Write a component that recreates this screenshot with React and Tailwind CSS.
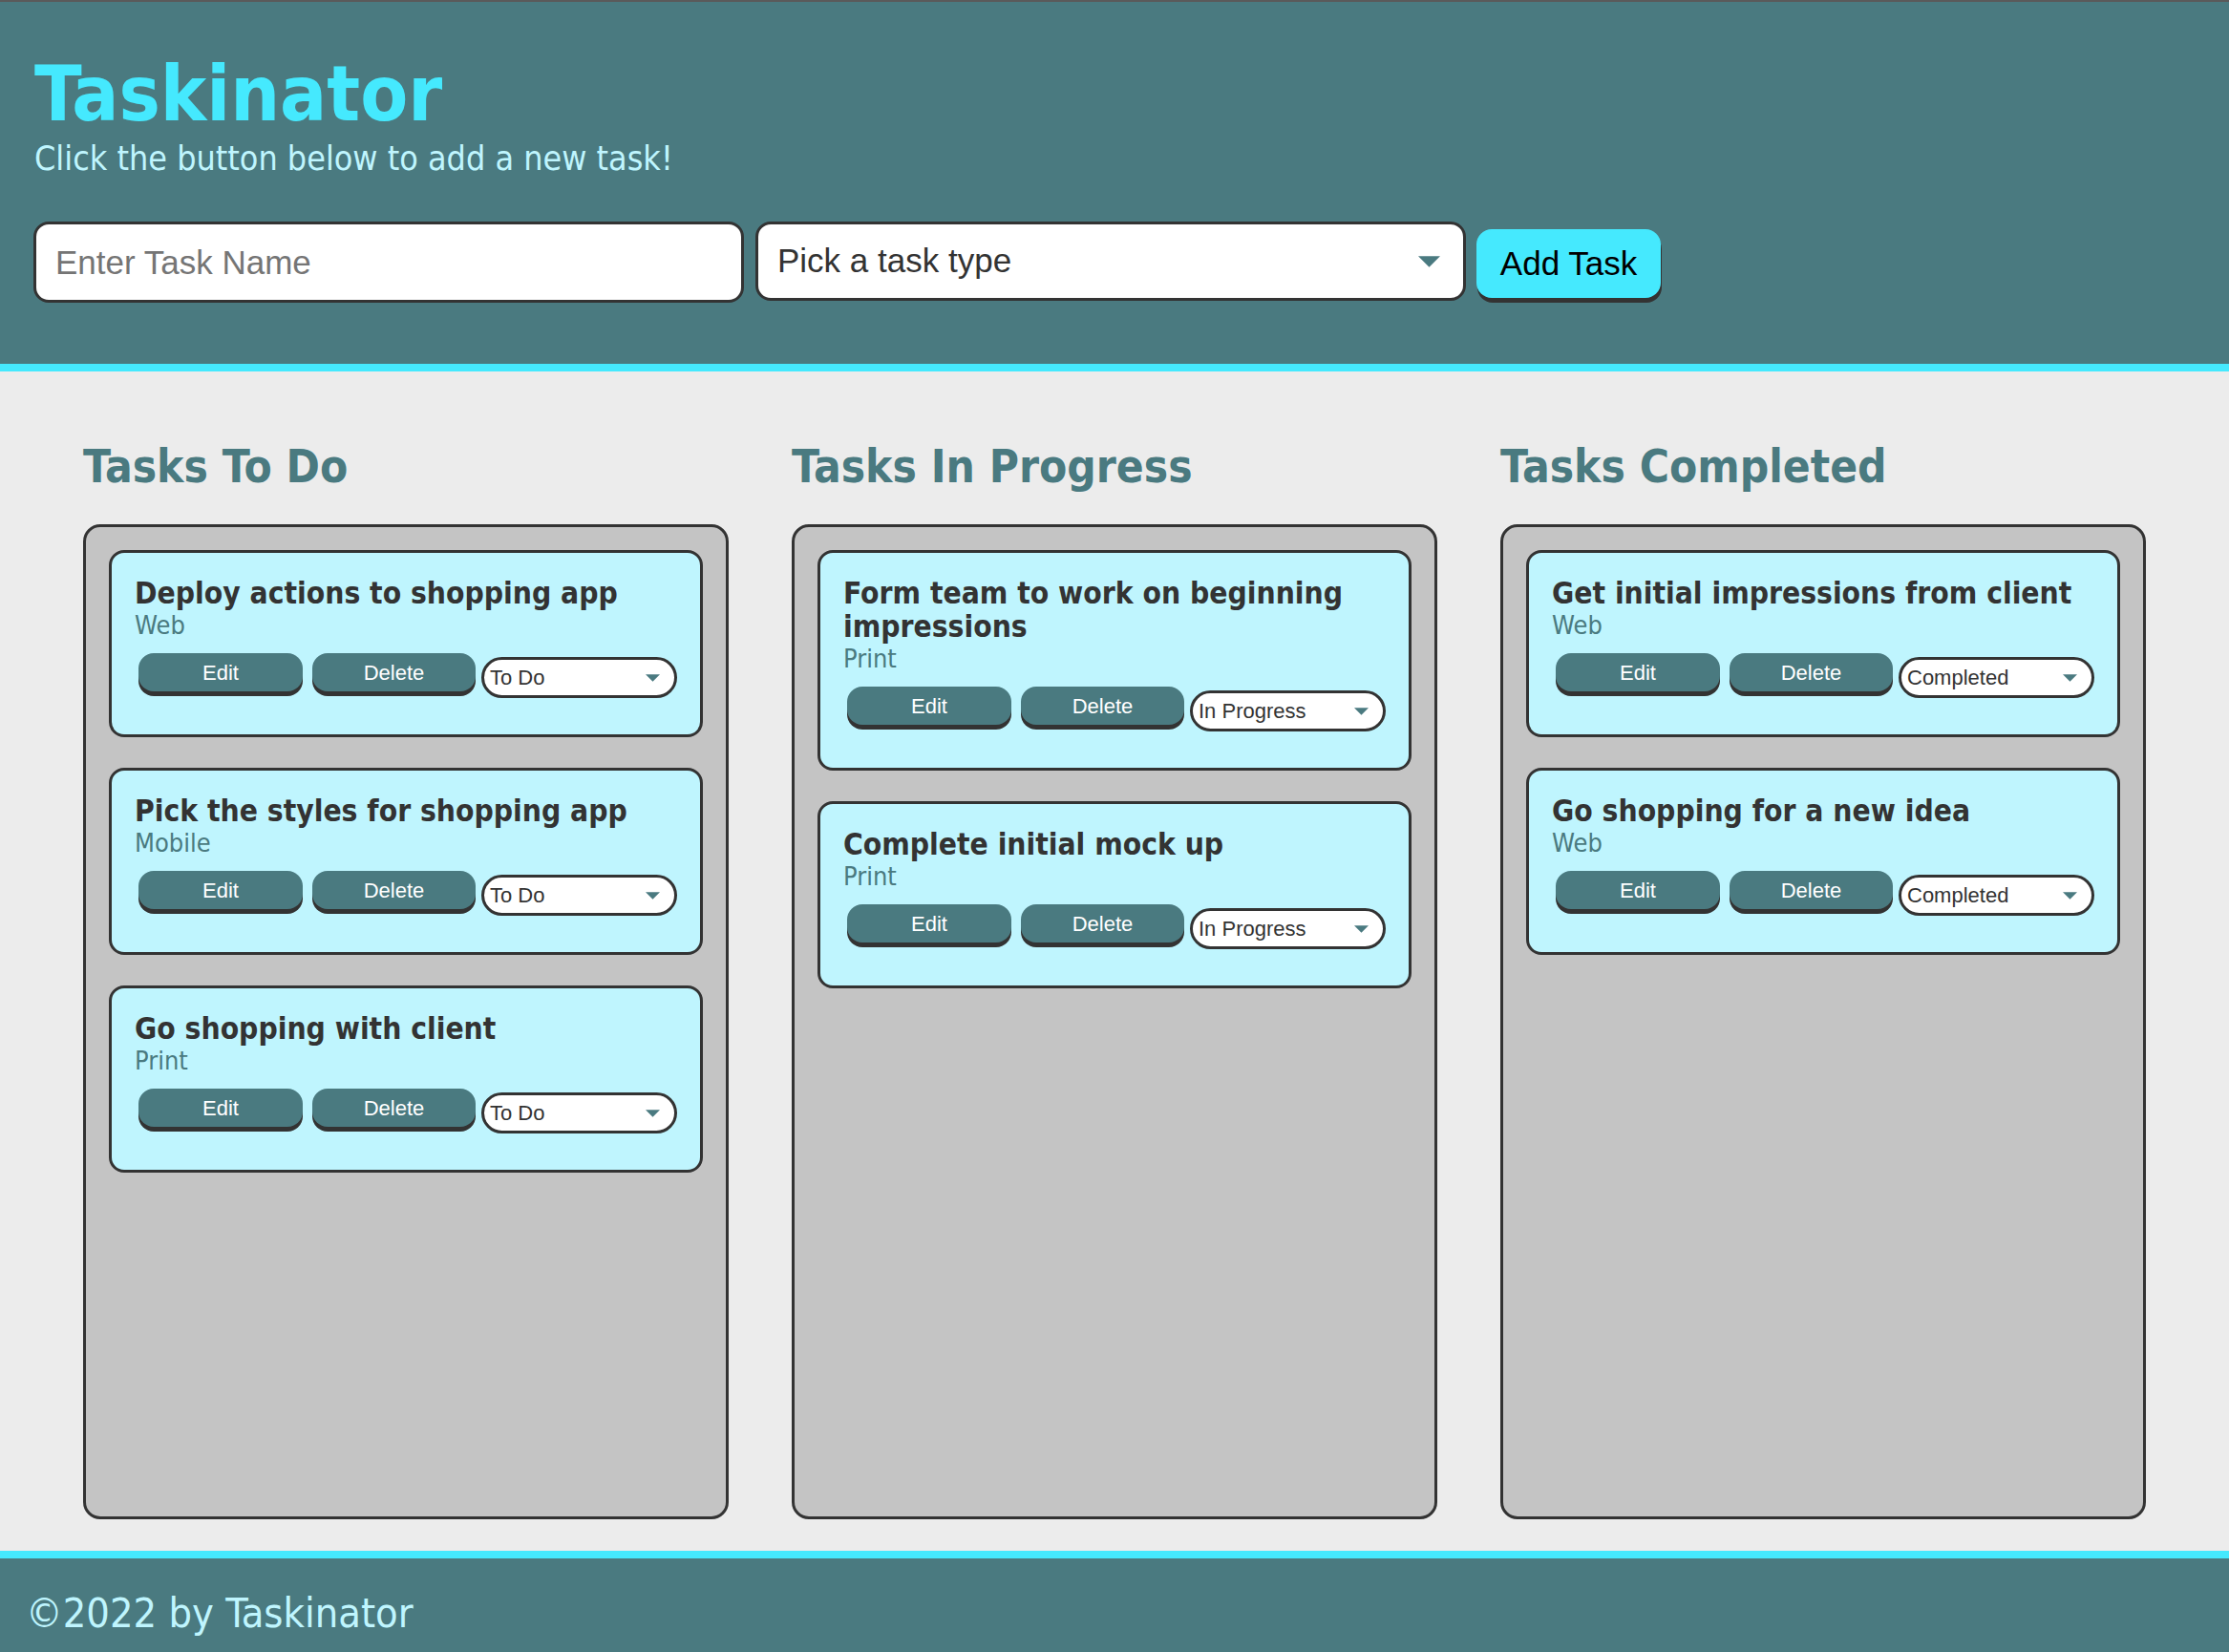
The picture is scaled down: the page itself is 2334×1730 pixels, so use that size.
import React from "react";

const cond = "font-['DejaVu_Sans_Condensed','DejaVu_Sans',sans-serif]";
const arial = "font-['Liberation_Sans',Arial,sans-serif]";

function Arrow({ className }) {
  return (
    <svg className={className} viewBox="0 0 20 10" fill="#4a7a80">
      <path d="M0 0 L20 0 L10 10 Z" />
    </svg>
  );
}

function Card({ name, type, status }) {
  return (
    <div className="rounded-[16px] border-[3px] border-[#333] bg-[#bff5fe] px-[24px] pt-[25px] pb-[38px]">
      <h3 className={`${cond} text-[31.5px] leading-[35px] font-bold text-[#333]`}>{name}</h3>
      <p className={`${cond} text-[27px] leading-[31px] text-[#4a7a80]`}>{type}</p>
      <div className="mt-[14px] flex items-start">
        <button className={`${arial} ml-[4px] h-[40px] w-[172px] rounded-[16px] bg-[#4a7a80] text-[22px] text-white shadow-[0_5px_0_#333]`}>
          Edit
        </button>
        <button className={`${arial} ml-[10px] h-[40px] w-[171px] rounded-[16px] bg-[#4a7a80] text-[22px] text-white shadow-[0_5px_0_#333]`}>
          Delete
        </button>
        <div className={`${arial} ml-[6px] mt-[4px] flex h-[43px] flex-1 items-center justify-between rounded-[22px] border-[3px] border-[#333] bg-white pl-[6px] pr-[15px] text-[22px] text-[#333]`}>
          <span>{status}</span>
          <Arrow className="h-[8px] w-[15px]" />
        </div>
      </div>
    </div>
  );
}

function Column({ title, tasks }) {
  return (
    <section className="flex flex-col">
      <h2 className={`${cond} text-[47.4px] leading-[53px] font-bold text-[#4a7a80]`}>{title}</h2>
      <div className="mt-[34px] flex h-[1042px] flex-col gap-[32px] rounded-[18px] border-[3px] border-[#333] bg-[#c4c4c4] p-[24px]">
        {tasks.map((t) => (
          <Card key={t.name} {...t} />
        ))}
      </div>
    </section>
  );
}

export default function App() {
  const todo = [
    { name: "Deploy actions to shopping app", type: "Web", status: "To Do" },
    { name: "Pick the styles for shopping app", type: "Mobile", status: "To Do" },
    { name: "Go shopping with client", type: "Print", status: "To Do" },
  ];
  const progress = [
    { name: "Form team to work on beginning impressions", type: "Print", status: "In Progress" },
    { name: "Complete initial mock up", type: "Print", status: "In Progress" },
  ];
  const done = [
    { name: "Get initial impressions from client", type: "Web", status: "Completed" },
    { name: "Go shopping for a new idea", type: "Web", status: "Completed" },
  ];
  return (
    <div className="min-h-[1730px] bg-[#ececec]">
      <header className="border-t-[2px] border-b-[8px] border-t-[#5a5a5a] border-b-[#45e9fe] bg-[#4a7a80] px-[36px] pt-[50px] pb-[64px]">
        <h1 className={`${cond} text-[81px] leading-[93px] font-bold text-[#45e9fe]`}>Taskinator</h1>
        <p className={`${cond} text-[35.6px] leading-[42px] text-[#bff5fe]`}>Click the button below to add a new task!</p>
        <form className="mt-[45px] flex items-start" onSubmit={(e) => e.preventDefault()}>
          <input
            type="text"
            placeholder="Enter Task Name"
            className={`${arial} -ml-[1px] h-[85px] w-[744px] rounded-[16px] border-[3px] border-[#333] bg-white px-[20px] text-[35px] text-[#333] placeholder:text-[#757575] outline-none`}
          />
          <div className={`${arial} ml-[12px] flex h-[83px] w-[744px] items-center justify-between rounded-[16px] border-[3px] border-[#333] bg-white pl-[20px] pr-[24px] text-[35px] text-[#333]`}>
            <span>Pick a task type</span>
            <Arrow className="h-[12px] w-[23px]" />
          </div>
          <button className={`${arial} ml-[11px] mt-[8px] h-[72px] w-[193px] rounded-[16px] bg-[#45e9fe] text-[35px] text-black shadow-[1px_5px_0_#333]`}>
            Add Task
          </button>
        </form>
      </header>
      <main className="grid grid-cols-3 gap-[66px] px-[87px] pt-[73px] pb-[33px]">
        <Column title="Tasks To Do" tasks={todo} />
        <Column title="Tasks In Progress" tasks={progress} />
        <Column title="Tasks Completed" tasks={done} />
      </main>
      <footer className="border-t-[8px] border-t-[#45e9fe] bg-[#4a7a80] px-[27px] pt-[32px] pb-[20px]">
        <p className={`${cond} text-[43px] leading-[51px] text-[#bff5fe]`}>©2022 by Taskinator</p>
      </footer>
    </div>
  );
}
